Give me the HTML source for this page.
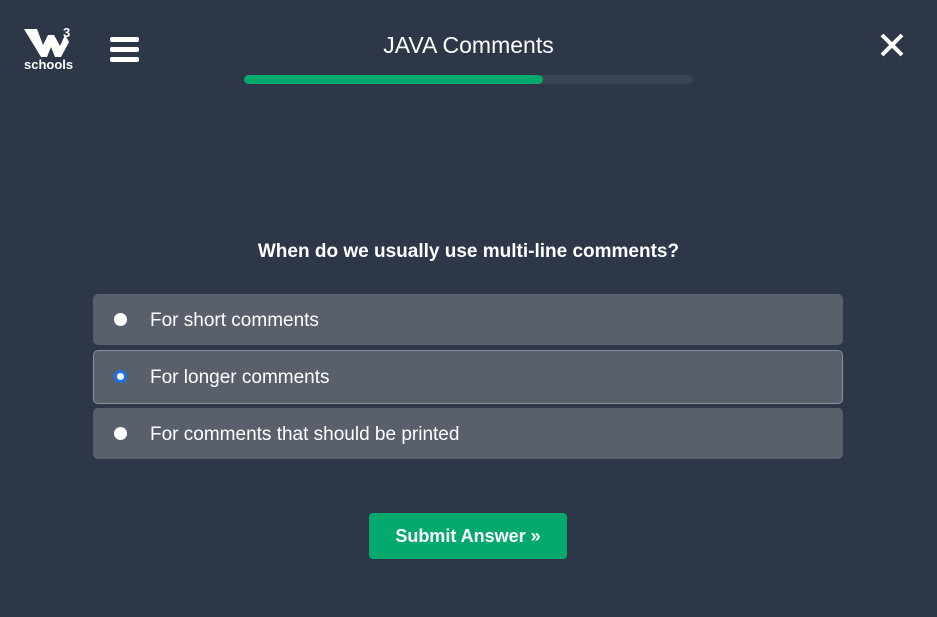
<!DOCTYPE html>
<html><head><style>
body{margin:0;width:937px;height:617px;background:#2d3748;font-family:"Liberation Sans",sans-serif;color:#fff;position:relative;overflow:hidden}
.abs{position:absolute}
.opt{position:absolute;left:93px;width:750px;background:#595f6b;border-radius:5px;box-sizing:border-box}
.opt span{position:absolute;left:57px;font-size:19px;top:50%;transform:translateY(-50%)}
.r{position:absolute;left:21px;top:50%;width:13px;height:13px;margin-top:-7px;border-radius:50%;background:#fff;box-sizing:border-box}
</style></head><body>
<svg class="abs" style="left:22px;top:24px" width="54" height="48" viewBox="0 0 54 48">
<path d="M2 5 L15 5 L21 21 L26 11 L32 11 L38 22 L43 11 L47 18 L39 33 L33 33 L29 23 L25 33 L19 33 Z" fill="#fff"/>
<text x="41" y="13" font-size="13" font-weight="bold" fill="#fff" font-family="Liberation Sans">3</text>
<text x="2" y="45" font-size="13" font-weight="bold" fill="#fff" font-family="Liberation Sans">schools</text>
</svg>
<div class="abs" style="left:110px;top:37px;width:29px;height:5px;background:#fff;border-radius:2px"></div>
<div class="abs" style="left:110px;top:47px;width:29px;height:5px;background:#fff;border-radius:2px"></div>
<div class="abs" style="left:110px;top:57px;width:29px;height:5px;background:#fff;border-radius:2px"></div>
<div class="abs" style="left:244px;width:449px;top:32px;text-align:center;font-size:23px">JAVA Comments</div>
<div class="abs" style="left:244px;top:75px;width:449px;height:9px;background:#3a4452;border-radius:5px"></div>
<div class="abs" style="left:244px;top:75px;width:299px;height:9px;background:#04aa6d;border-radius:5px"></div>
<svg class="abs" style="left:879px;top:32px" width="26" height="26"><path d="M3 3L23 23M23 3L3 23" stroke="#fff" stroke-width="4"/></svg>
<div class="abs" style="left:0;width:937px;top:241px;text-align:center;font-size:19px;font-weight:bold">When do we usually use multi-line comments?</div>
<div class="opt" style="top:294px;height:51px"><div class="r"></div><span style="margin-top:1px">For short comments</span></div>
<div class="opt" style="top:350px;height:54px;border:1px solid #8a909a"><div class="r" style="border:3px solid #1a73e8;background:#fff;left:20px"></div><span style="left:56px;margin-top:1px">For longer comments</span></div>
<div class="opt" style="top:408px;height:51px"><div class="r"></div><span style="margin-top:1px">For comments that should be printed</span></div>
<div class="abs" style="left:369px;top:513px;width:198px;height:46px;background:#04aa6d;border-radius:4px;text-align:center;line-height:46px;font-size:18px;font-weight:bold">Submit Answer »</div>
</body></html>
